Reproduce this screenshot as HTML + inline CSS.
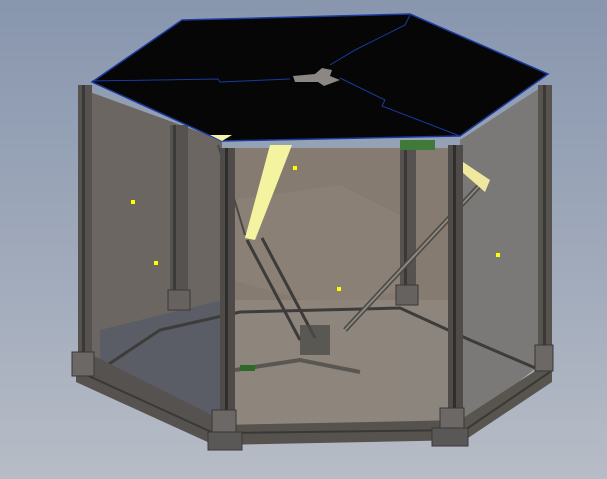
<!DOCTYPE html>
<html><head><style>
html,body{margin:0;padding:0;width:607px;height:479px;overflow:hidden;}
body{background:linear-gradient(180deg,#8896ae 0%,#a0aabb 55%,#b7bcc6 100%);}
svg{position:absolute;left:0;top:0}
</style></head><body>
<svg width="607" height="479" viewBox="0 0 607 479" xmlns="http://www.w3.org/2000/svg">
<!-- panels -->
<polygon points="90,92 222,140 222,432 90,368" fill="#6b6661"/>
<polygon points="100,330 222,300 222,430 100,372" fill="#5a5d65"/>
<polygon points="232,148 450,148 450,430 232,430" fill="#857b71"/>
<polygon points="235,300 450,300 450,430 235,430" fill="#8e867c"/>
<polygon points="232,200 340,185 400,215 400,290 340,310 232,280" fill="#8d8378" opacity="0.6"/>
<polygon points="460,140 540,88 540,365 460,428" fill="#7b7977"/>
<polygon points="400,300 460,330 460,428 400,430" fill="#8c857d"/>
<!-- back posts -->
<rect x="170" y="125" width="18" height="185" fill="#55524f"/>
<rect x="173" y="125" width="3" height="185" fill="#3c3a38"/>
<rect x="400" y="145" width="16" height="155" fill="#55524f"/>
<rect x="404" y="145" width="3" height="155" fill="#3a3938"/>
<!-- floor lines -->
<polyline points="100,370 160,330 240,312 400,308 470,340 540,370" fill="none" stroke="#3e3c3a" stroke-width="3"/>
<polyline points="235,370 300,360 360,372" fill="none" stroke="#5a5652" stroke-width="4"/>
<!-- arms -->
<polygon points="270,145 292,145 255,240 245,238" fill="#f4f3a0"/>
<line x1="247" y1="240" x2="300" y2="340" stroke="#3d3b39" stroke-width="3"/>
<line x1="262" y1="238" x2="315" y2="338" stroke="#3d3b39" stroke-width="3"/>
<line x1="480" y1="185" x2="345" y2="330" stroke="#4a4845" stroke-width="5"/>
<line x1="480" y1="185" x2="345" y2="330" stroke="#8d8880" stroke-width="2"/>
<polygon points="460,160 490,180 485,192 462,172" fill="#efe9a0"/>
<line x1="218" y1="145" x2="245" y2="235" stroke="#4a4845" stroke-width="2"/>
<rect x="300" y="325" width="30" height="30" fill="#4e4c49" opacity="0.8"/>
<rect x="240" y="365" width="15" height="6" fill="#2c6a2a"/>
<!-- left back post -->
<rect x="78" y="85" width="14" height="290" fill="#55524f"/>
<rect x="82" y="85" width="3" height="290" fill="#3a3836"/>
<!-- right back post -->
<rect x="538" y="85" width="14" height="290" fill="#57534f"/>
<rect x="543" y="85" width="3" height="290" fill="#3a3836"/>
<!-- bottom frame -->
<polygon points="76,360 92,355 222,420 222,442 212,444 76,382" fill="#55524f"/>
<polyline points="80,372 218,435" stroke="#3a3836" stroke-width="2"/>
<polygon points="220,425 465,420 465,440 220,445" fill="#56534f"/>
<line x1="222" y1="433" x2="462" y2="430" stroke="#3a3836" stroke-width="2"/>
<polygon points="460,420 552,360 552,382 462,442" fill="#58554f"/>
<line x1="462" y1="432" x2="550" y2="372" stroke="#3a3836" stroke-width="2"/>
<!-- front posts -->
<rect x="220" y="148" width="15" height="290" fill="#4e4b48"/>
<rect x="225" y="148" width="3" height="290" fill="#2f2e2c"/>
<rect x="448" y="145" width="15" height="293" fill="#4e4b48"/>
<rect x="453" y="145" width="3" height="293" fill="#2f2e2c"/>
<!-- corner blocks -->
<rect x="72" y="352" width="22" height="24" fill="#6b6866" stroke="#3a3836"/>
<rect x="212" y="410" width="24" height="22" fill="#6b6866" stroke="#3a3836"/>
<rect x="208" y="432" width="34" height="18" fill="#5a5856" stroke="#3a3836"/>
<rect x="440" y="408" width="24" height="22" fill="#6b6866" stroke="#3a3836"/>
<rect x="432" y="428" width="36" height="18" fill="#5a5856" stroke="#3a3836"/>
<rect x="535" y="345" width="18" height="26" fill="#6b6866" stroke="#3a3836"/>
<rect x="168" y="290" width="22" height="20" fill="#65625f" stroke="#3a3836"/>
<rect x="396" y="285" width="22" height="20" fill="#65625f" stroke="#3a3836"/>
<!-- yellow dots -->
<g fill="#ffff00">
<rect x="131" y="200" width="4" height="4"/><rect x="154" y="261" width="4" height="4"/>
<rect x="293" y="166" width="4" height="4"/><rect x="337" y="287" width="4" height="4"/>
<rect x="496" y="253" width="4" height="4"/>
</g>
<!-- top lid -->
<polygon points="92,82 182,20 410,14 548,74 460,136 222,141" fill="#060606" stroke="#1a3aa0" stroke-width="1.5"/>
<polyline points="92,81 218,79 220,82 290,79" fill="none" stroke="#1a3aa0" stroke-width="1"/>
<polyline points="340,78 385,100 382,106 460,136" fill="none" stroke="#1a3aa0" stroke-width="1"/>
<polyline points="410,15 405,25 355,50 330,65" fill="none" stroke="#1a3aa0" stroke-width="1"/>
<polygon points="293,76 315,74 322,68 332,70 330,76 340,80 324,86 318,82 295,82" fill="#8a8784"/>
<polygon points="222,141 210,135 232,135" fill="#f3f2a8"/>
<rect x="400" y="140" width="35" height="10" fill="#3f7a3a"/>
</svg>
</body></html>
